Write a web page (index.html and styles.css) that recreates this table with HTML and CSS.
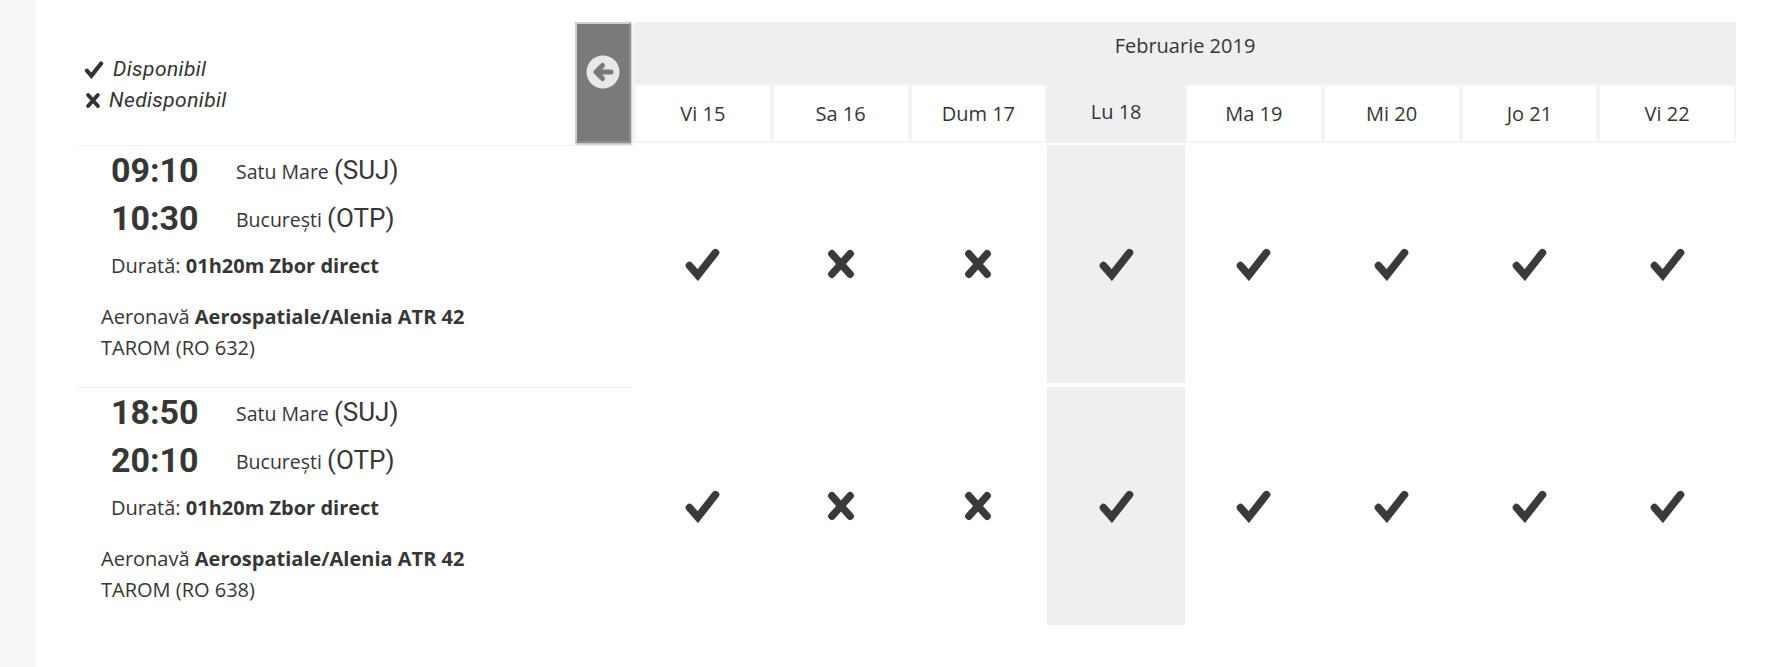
FILE: index.html
```html
<!DOCTYPE html>
<html lang="ro">
<head>
<meta charset="utf-8">
<title>Orar zboruri</title>
<link rel="stylesheet" href="styles.css">
</head>
<body>
<div class="panel">
  <div class="schedule">
    <div class="head-left">
      <div class="legend">
        <div class="legend-item">
          <svg class="legend-check" viewBox="0 0 30 28"><polyline points="4,15 11,23 26,4" fill="none" stroke="#333" stroke-width="6.5" stroke-linecap="round" stroke-linejoin="miter"/></svg>
          <span>Disponibil</span>
        </div>
        <div class="legend-item">
          <svg class="legend-x" viewBox="0 0 26 28"><path d="M5 5 L21 23 M21 5 L5 23" fill="none" stroke="#333" stroke-width="6.5" stroke-linecap="round"/></svg>
          <span>Nedisponibil</span>
        </div>
      </div>
      <button class="prev-btn" type="button" aria-label="Înapoi">
        <svg viewBox="0 0 34 34" width="34" height="34"><circle cx="17" cy="17" r="16.5" fill="#e8e8e8"/><path d="M25 17 H10 M16.5 10.5 L10 17 L16.5 23.5" fill="none" stroke="#7a7a7a" stroke-width="5" stroke-linecap="round" stroke-linejoin="round"/></svg>
      </button>
    </div>
    <div class="month">Februarie 2019</div>

    <div class="day">Vi 15</div>
    <div class="day">Sa 16</div>
    <div class="day">Dum 17</div>
    <div class="day day-sel">Lu 18</div>
    <div class="day">Ma 19</div>
    <div class="day">Mi 20</div>
    <div class="day">Jo 21</div>
    <div class="day">Vi 22</div>

    <div class="flight">
      <div class="leg"><span class="time">09:10</span><span class="city">Satu Mare <span class="code">(SUJ)</span></span></div>
      <div class="leg"><span class="time">10:30</span><span class="city">București <span class="code">(OTP)</span></span></div>
      <div class="duration">Durată: <b>01h20m Zbor direct</b></div>
      <div class="aircraft">Aeronavă <b>Aerospatiale/Alenia ATR 42</b></div>
      <div class="carrier">TAROM (RO 632)</div>
    </div>
    <div class="cell"><svg class="ok" viewBox="0 0 30 28"><polyline points="4,15 11,23 26,4" fill="none" stroke="#3a3a3a" stroke-width="6.5" stroke-linecap="round" stroke-linejoin="miter"/></svg></div>
    <div class="cell"><svg class="no" viewBox="0 0 26 28"><path d="M5 5 L21 23 M21 5 L5 23" fill="none" stroke="#3a3a3a" stroke-width="6.5" stroke-linecap="round"/></svg></div>
    <div class="cell"><svg class="no" viewBox="0 0 26 28"><path d="M5 5 L21 23 M21 5 L5 23" fill="none" stroke="#3a3a3a" stroke-width="6.5" stroke-linecap="round"/></svg></div>
    <div class="cell cell-sel"><svg class="ok" viewBox="0 0 30 28"><polyline points="4,15 11,23 26,4" fill="none" stroke="#3a3a3a" stroke-width="6.5" stroke-linecap="round" stroke-linejoin="miter"/></svg></div>
    <div class="cell"><svg class="ok" viewBox="0 0 30 28"><polyline points="4,15 11,23 26,4" fill="none" stroke="#3a3a3a" stroke-width="6.5" stroke-linecap="round" stroke-linejoin="miter"/></svg></div>
    <div class="cell"><svg class="ok" viewBox="0 0 30 28"><polyline points="4,15 11,23 26,4" fill="none" stroke="#3a3a3a" stroke-width="6.5" stroke-linecap="round" stroke-linejoin="miter"/></svg></div>
    <div class="cell"><svg class="ok" viewBox="0 0 30 28"><polyline points="4,15 11,23 26,4" fill="none" stroke="#3a3a3a" stroke-width="6.5" stroke-linecap="round" stroke-linejoin="miter"/></svg></div>
    <div class="cell"><svg class="ok" viewBox="0 0 30 28"><polyline points="4,15 11,23 26,4" fill="none" stroke="#3a3a3a" stroke-width="6.5" stroke-linecap="round" stroke-linejoin="miter"/></svg></div>

    <div class="flight">
      <div class="leg"><span class="time">18:50</span><span class="city">Satu Mare <span class="code">(SUJ)</span></span></div>
      <div class="leg"><span class="time">20:10</span><span class="city">București <span class="code">(OTP)</span></span></div>
      <div class="duration">Durată: <b>01h20m Zbor direct</b></div>
      <div class="aircraft">Aeronavă <b>Aerospatiale/Alenia ATR 42</b></div>
      <div class="carrier">TAROM (RO 638)</div>
    </div>
    <div class="cell"><svg class="ok" viewBox="0 0 30 28"><polyline points="4,15 11,23 26,4" fill="none" stroke="#3a3a3a" stroke-width="6.5" stroke-linecap="round" stroke-linejoin="miter"/></svg></div>
    <div class="cell"><svg class="no" viewBox="0 0 26 28"><path d="M5 5 L21 23 M21 5 L5 23" fill="none" stroke="#3a3a3a" stroke-width="6.5" stroke-linecap="round"/></svg></div>
    <div class="cell"><svg class="no" viewBox="0 0 26 28"><path d="M5 5 L21 23 M21 5 L5 23" fill="none" stroke="#3a3a3a" stroke-width="6.5" stroke-linecap="round"/></svg></div>
    <div class="cell cell-sel"><svg class="ok" viewBox="0 0 30 28"><polyline points="4,15 11,23 26,4" fill="none" stroke="#3a3a3a" stroke-width="6.5" stroke-linecap="round" stroke-linejoin="miter"/></svg></div>
    <div class="cell"><svg class="ok" viewBox="0 0 30 28"><polyline points="4,15 11,23 26,4" fill="none" stroke="#3a3a3a" stroke-width="6.5" stroke-linecap="round" stroke-linejoin="miter"/></svg></div>
    <div class="cell"><svg class="ok" viewBox="0 0 30 28"><polyline points="4,15 11,23 26,4" fill="none" stroke="#3a3a3a" stroke-width="6.5" stroke-linecap="round" stroke-linejoin="miter"/></svg></div>
    <div class="cell"><svg class="ok" viewBox="0 0 30 28"><polyline points="4,15 11,23 26,4" fill="none" stroke="#3a3a3a" stroke-width="6.5" stroke-linecap="round" stroke-linejoin="miter"/></svg></div>
    <div class="cell"><svg class="ok" viewBox="0 0 30 28"><polyline points="4,15 11,23 26,4" fill="none" stroke="#3a3a3a" stroke-width="6.5" stroke-linecap="round" stroke-linejoin="miter"/></svg></div>
  </div>
</div>
</body>
</html>
```

FILE: styles.css
```css
html, body {
  margin: 0;
  padding: 0;
  background: #f6f6f6;
  height: 100%;
}

body {
  font-family: "Open Sans", "Lato", sans-serif;
  color: #363636;
}

.panel {
  margin-left: 36px;
  background: #fff;
  min-height: 100%;
  padding: 22px 0 0 41px;
  box-sizing: border-box;
}

.schedule {
  display: grid;
  grid-template-columns: 557px repeat(8, 137.75px);
  grid-template-rows: 62px 59px 242px 242px;
}

.head-left {
  grid-row: 1 / span 2;
  grid-column: 1;
  display: flex;
  justify-content: space-between;
}

.legend {
  padding: 32px 0 0 7px;
  font-family: "Roboto", sans-serif;
  font-style: italic;
  font-size: 21px;
  letter-spacing: 0.4px;
  line-height: 31px;
  color: #333;
}

.legend-item {
  display: flex;
  align-items: center;
}

.legend-check {
  width: 20px;
  height: 18px;
  margin-right: 9px;
}

.legend-x {
  width: 16px;
  height: 17px;
  margin: 0 8px 0 1px;
}

.prev-btn {
  width: 56px;
  height: 121px;
  margin-right: 3px;
  padding: 0;
  background: #7a7a7a;
  border: 2px solid #cfcfcf;
  border-right-color: #8e8e8e;
  border-bottom-color: #8e8e8e;
  box-shadow: 1px 2px 2px rgba(0, 0, 0, 0.25);
  display: flex;
  align-items: center;
  justify-content: center;
  padding-bottom: 22px;
}

.month {
  grid-column: 2 / span 8;
  grid-row: 1;
  background: #efefef;
  text-align: center;
  font-size: 20px;
  line-height: 26px;
  padding-top: 11px;
  box-sizing: border-box;
}

.day {
  grid-row: 2;
  background: #fff;
  border: 2px solid #f4f4f4;
  display: flex;
  align-items: center;
  justify-content: center;
  font-size: 20px;
}

.day-sel {
  background: #efefef;
  border-color: #efefef;
  padding-bottom: 4px;
}

.flight {
  grid-column: 1;
  margin-top: 2px;
  border-top: 1px solid #f0f0f0;
  padding-left: 34px;
}

.leg {
  display: flex;
  align-items: flex-start;
  height: 48px;
  line-height: 48px;
}

.time {
  width: 125px;
  font-family: "Roboto", sans-serif;
  font-weight: 700;
  font-size: 34px;
  color: #363636;
}

.city {
  font-size: 19.5px;
}

.code {
  font-family: "Roboto", sans-serif;
  font-size: 26px;
}

.duration {
  margin-top: 11px;
  font-size: 20px;
  line-height: 26px;
}

.aircraft {
  margin: 22px 0 0 -10px;
  font-size: 20px;
  line-height: 31px;
}

.carrier {
  margin-left: -10px;
  font-size: 20px;
  line-height: 31px;
}

b {
  font-weight: 700;
}

.cell {
  border-style: solid;
  border-color: #fff;
  border-width: 2px 0;
  display: flex;
  align-items: center;
  justify-content: center;
}

.cell-sel {
  background: #efefef;
}

.ok {
  width: 37px;
  height: 33px;
}

.no {
  width: 30px;
  height: 32px;
}
```
